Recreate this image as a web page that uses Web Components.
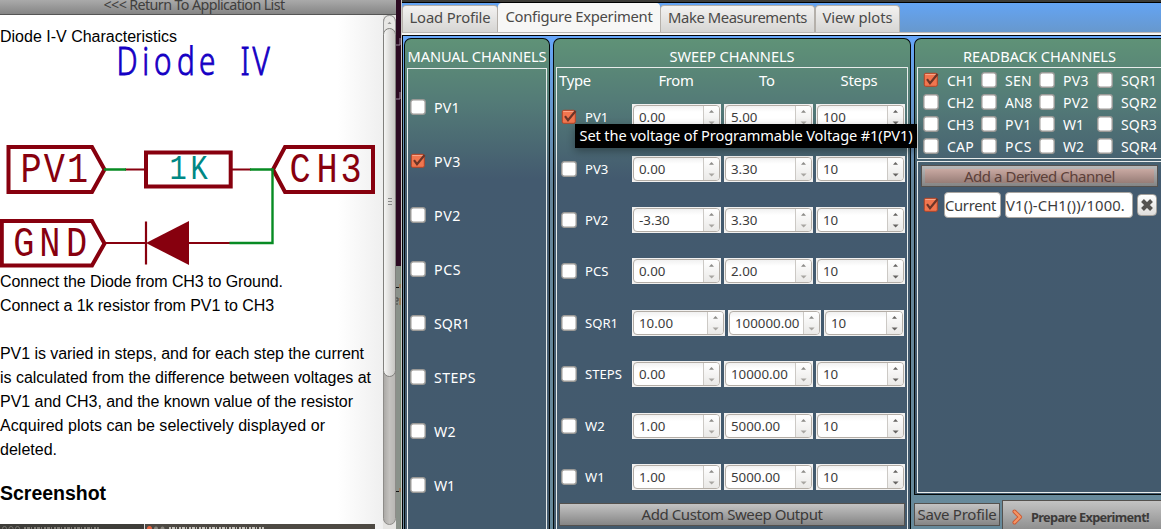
<!DOCTYPE html>
<html lang="en"><head><meta charset="utf-8"><title>Diode I-V Characteristics</title>
<style>html,body{margin:0;width:1161px;height:529px;overflow:hidden;background:#2c0a22}</style></head>
<body><lab-app></lab-app>
<script>
const define=(name,html,setup)=>{
  const t=document.createElement('template');t.innerHTML=html;
  customElements.define(name,class extends HTMLElement{
    constructor(){super();this.attachShadow({mode:'open'}).append(t.content.cloneNode(true));}
    connectedCallback(){if(setup)setup(this,this.shadowRoot);}
  });
};

/* Text that keeps a fixed measure by adjusting its tracking. */
define('fit-text',`<style>:host{display:block;white-space:pre;flex:none}span{display:inline-block}</style><span><slot></slot></span>`,(el,r)=>{
  const w=+el.getAttribute('w'),s=r.querySelector('span');
  const n=el.textContent.length;
  if(!w)return;
  el.style.width=w+'px';
  s.style.letterSpacing='0px';
  s.style.letterSpacing=((w-s.getBoundingClientRect().width)/n)+'px';
});

define('check-box',`<style>
:host{display:block;flex:none;width:16px;height:16px}svg{display:block;overflow:visible}
.on{display:none}:host([checked]) .on{display:block}:host([checked]) .off{display:none}</style>
<svg width="16" height="16" viewBox="0 0 16 16">
<g class="off"><rect x=".8" y=".8" width="14.4" height="14.4" rx="2.5" fill="#fff" stroke="#9b9a97" stroke-width="1.4"/></g>
<g class="on"><rect x="1.3" y="1.3" width="13" height="13" rx="1.5" fill="#f1764f" stroke="#b54426"/><path d="M2.3 2.5h11" stroke="#f9a587"/><path d="M4 7.2l3 4L14.6 2" fill="none" stroke="#6b3528" stroke-width="2.2"/></g></svg>`);

define('check-row',`<style>:host{display:flex;align-items:center;gap:8px;color:#fff}</style><check-box></check-box><slot></slot>`,(el,r)=>{
  if(el.hasAttribute('on'))r.querySelector('check-box').setAttribute('checked','');
});

define('spin-box',`<style>
:host{display:block;box-sizing:border-box;height:26px;background:#f2f1f0;padding:1px;flex:none}
.f{box-sizing:border-box;height:24px;border:1.5px solid #b3ada6;border-radius:4px;display:flex;background:linear-gradient(#f1f1f1,#fff 6px);overflow:hidden}
.v{flex:1;padding-left:5px;line-height:22px;color:#3c3c3c;font-size:13.3px}
.b{width:15px;border-left:1px solid #ccc9c5;background:linear-gradient(#fff,#eae9e7)}
svg{display:block}</style>
<div class="f"><div class="v"><slot></slot></div><div class="b"><svg width="15" height="22" viewBox="0 0 15 22"><path d="M5 6.700L7.500 4 10 6.700z" fill="#8d8c89"/><path class="d" d="M4.600 15.500h6L7.600 18.500z" fill="#a8a6a2"/></svg></div></div>`,(el,r)=>{
  el.style.width=el.getAttribute('w')+'px';
  if(el.hasAttribute('strong'))r.querySelectorAll('path').forEach(p=>p.setAttribute('fill','#666462'));
});

define('sweep-row',`<style>
:host{display:grid;grid-template-columns:71px auto;align-items:center;height:51.45px;flex:none;padding-left:4px;font-size:13.1px}
.s{display:flex;gap:3px}</style><check-row><fit-text></fit-text></check-row><div class="s"></div>`,(el,r)=>{
  const a=n=>el.getAttribute(n),f=r.querySelector('fit-text');
  if(el.hasAttribute('on'))r.querySelector('check-row').shadowRoot.querySelector('check-box').setAttribute('checked','');
  f.replaceWith(Object.assign(document.createElement('fit-text'),{textContent:a('name')}));
  const widths=a('name')==='SQR1'?[93,93,80]:[89,89,89];
  r.querySelector('.s').innerHTML=['from','to','steps'].map((k,i)=>'<spin-box w="'+widths[i]+'"'+(i==2?' strong':'')+'>'+a(k)+'</spin-box>').join('');
});

define('metal-button',`<style>
:host{display:flex;align-items:center;justify-content:center;box-sizing:border-box;border:1.5px solid #54514e;background:linear-gradient(#c3c3c3,#858585);color:#3c3a39;font-size:15px}
:host([warm]){color:#5c4039;background:linear-gradient(#c9a9a2,#977d77) 3px 3px/calc(100% - 6px) calc(100% - 6px) no-repeat,linear-gradient(#b9b9b9,#858585)}</style><slot></slot>`);

define('channel-panel',`<style>
:host{display:flex;flex-direction:column;box-sizing:border-box;border:1.5px solid #050b0b;border-bottom:0;border-radius:7px 7px 0 0;background:linear-gradient(#5f9277 0,#537a77 65px,#435a6f 140px,#435a6d);padding:0 2px;color:#fff}
header{height:28px;display:flex;align-items:center;justify-content:center;font-size:14.6px;box-sizing:border-box;padding-top:6px;flex:none}</style>
<header><slot name="title"></slot></header><slot></slot>`);

define('tab-item',`<style>
:host{display:flex;align-items:center;justify-content:center;box-sizing:border-box;height:27px;border:1px solid #b5b0aa;border-bottom:0;border-radius:4px 4px 0 0;background:linear-gradient(#f3f2f1,#d6d5d3);color:#4b4a48;font-size:14.8px;margin-top:2px;padding-bottom:4px}
:host([active]){background:#f7f7f6;height:31px;margin:0;border-color:#f7f7f6;padding-bottom:6px}</style><slot></slot>`,el=>el.style.width=el.getAttribute('w')+'px');

define('tool-tip',`<style>:host{display:flex;align-items:center;justify-content:center;box-sizing:border-box;padding-bottom:2px;background:#000;color:#fff;box-shadow:0 3px 8px #0005;font-size:14.6px}</style><slot></slot>`);

define('diode-circuit',`<style>:host{display:block;height:225px}svg{display:block}
.t{font-family:"Noto Sans","Open Sans",sans-serif;font-weight:300;font-size:38px}
.m{font-family:"Liberation Mono",monospace;font-size:43px}</style>
<svg width="383" height="225" viewBox="0 45 383 225">
<g class="t" transform="scale(.78 1)" fill="#1500c4" stroke="#1500c4" stroke-width=".9"><text x="149.500 182.500 197.500 227 255.200" y="75">Diode</text><text x="308.500 323.800" y="75">IV</text></g>
<g fill="none" stroke="#87000e" stroke-width="4"><path d="M8.500 147H92L104.500 169.500 92 192H8.500z"/><path d="M146 152.500h84.700v34H146z"/><path d="M373 147H285L273 169.500 285 192h88z"/><path d="M1.800 221H92L104.500 243.500 92 265.500H1.800z"/></g>
<g fill="none" stroke="#87000e" stroke-width="2.2"><path d="M125 169.500h20M232 169.500h19M106 243h40M188 243h42M146 221.500v43"/></g>
<path d="M146 243l43-22v44z" fill="#87000e"/>
<path d="M104 169.500h22M250 169.500h22.500V243H229.500" fill="none" stroke="#078b23" stroke-width="2.4"/>
<g class="m" fill="#87000e" transform="scale(.82 1)"><text x="24.900 53.500 81.600" y="182">PV1</text><text x="352.900 385.900 415.100" y="182">CH3</text><text x="16.300 48 80.400" y="256">GND</text></g>
<text class="m" transform="scale(.82 1)" x="206.600 232.200" y="179" style="font-size:35px" fill="#008884">1K</text></svg>`);

define('scroll-bar',`<style>:host{display:block;width:13px;flex:none}svg{display:block}</style>
<svg width="13" height="514" viewBox="0 15 13 514"><defs><linearGradient id="g"><stop stop-color="#f7f7f6"/><stop offset="1" stop-color="#c5c3c0"/></linearGradient><linearGradient id="t"><stop stop-color="#aaa8a5"/><stop offset=".5" stop-color="#c4c2bf"/><stop offset="1" stop-color="#b8b6b3"/></linearGradient></defs>
<rect y="15" width="13" height="514" fill="#e5e4e2"/><rect x=".5" y="15.5" width="12" height="509" rx="6" fill="url(#t)" stroke="#8e8c89"/>
<path d="M.5 34V22Q1 15.5 6.5 15.5T12.5 22V34z" fill="#e8e7e5" stroke="#999"/><path d="M4.500 24l2-2.300 2 2.300z" fill="#999"/>
<rect x=".5" y="28.5" width="12" height="348" rx="6" fill="url(#g)" stroke="#81807d"/><path d="M5 198.500h4M5 201.500h4M5 204.500h4" stroke="#888"/></svg>`);

define('help-pane',`<style>
:host{display:flex;flex-direction:column;width:396px;background:#fff;color:#000;font:16px/24px "Liberation Sans",Arial,sans-serif}
header{height:15px;flex:none;box-sizing:border-box;border-bottom:1.5px solid #555;background:linear-gradient(#aaa,#858585);color:#403e3d;font:14.3px/14px "Noto Sans",sans-serif;display:flex;justify-content:center;align-items:center;padding:0 8px 5px 0}
.b{display:flex;height:514px}.c{width:383px;box-sizing:border-box;background:linear-gradient(90deg,#fff 88%,#efefef)}
.first{height:30px;padding-top:10px;box-sizing:border-box;line-height:23px}
h3{margin:16px 0 0;font-size:19.5px;line-height:30px;height:46px}
.shot{display:flex;height:6px;width:375px}.shot div{height:6px;box-sizing:border-box}.l{width:144px;background:#3e3d39}.r{flex:1;background:#4d4943;border-left:1px solid #ddd}.shot svg{display:block}</style>
<header><fit-text w="181">&lt;&lt;&lt; Return To Application List</fit-text></header>
<div class="b"><div class="c"><div class="first"><fit-text w="177">Diode I-V Characteristics</fit-text></div>
<diode-circuit></diode-circuit>
<fit-text w="283">Connect the Diode from CH3 to Ground.</fit-text><fit-text w="274">Connect a 1k resistor from PV1 to CH3</fit-text><br>
<fit-text w="364">PV1 is varied in steps, and for each step the current</fit-text><fit-text w="371">is calculated from the difference between voltages at</fit-text><fit-text w="353">PV1 and CH3, and the known value of the resistor</fit-text><fit-text w="325">Acquired plots can be selectively displayed or</fit-text><fit-text w="57">deleted.</fit-text>
<h3><fit-text w="106">Screenshot</fit-text></h3>
<div class="shot"><div class="l"><svg width="143" height="5"><g fill="none" stroke="#77756f"><circle cx="4.500" cy="4.500" r="2"/><circle cx="11" cy="4.500" r="2"/><circle cx="17.500" cy="4.500" r="2"/></g><path d="M24 4h75" stroke="#807e77" stroke-width="2" stroke-dasharray="2 1 3 1 1 2"/></svg></div><div class="r"><svg width="230" height="5"><circle cx="4.500" cy="4.500" r="2.500" fill="#e46442"/><circle cx="11" cy="4.500" r="2" fill="#8a867e"/><circle cx="17.500" cy="4.500" r="2" fill="#8a867e"/><path d="M24 4h95" stroke="#c5c3bc" stroke-width="2" stroke-dasharray="2 1 3 1 1 2"/></svg></div></div>
</div><scroll-bar></scroll-bar></div>`);

define('desk-gap',`<style>:host{display:block;width:6px;overflow:hidden}svg{display:block}</style>
<svg width="6" height="529"><path fill="#2c0a22" d="M0 0h6v529H0z"/><path fill="#8a918a" d="M0 266h6v263H0z"/><path d="M4.500 266v263" stroke="#789078"/><path d="M5.500 0v529" stroke="#cac8c6"/><path d="M0 45h4V38M0 99h4V92" fill="none" stroke="#9a879b"/><path d="M0 287.500h3M0 491.500h3" stroke="#111"/><path d="M4 284v4M4 298v7M4 488v4" stroke="#a86737"/><path d="M0 298h2v3H0M0 304h2" fill="none" stroke="#444"/></svg>`);

define('experiment-window',`<style>
:host{display:flex;flex-direction:column;width:759px;flex:none;height:529px;background:#668a9c;font-family:"Noto Sans","Open Sans",sans-serif}
.top{height:3px;flex:none;background:#3c3b37;border-bottom:1px solid #000;box-sizing:border-box}
.tabs{display:flex;height:29px;background:linear-gradient(#64a4f4,#6798cd);flex:none;align-items:flex-start}
.line{height:4px;flex:none;background:#f7f7f6;border-bottom:1.5px solid #05070a;box-sizing:border-box;border-top:.5px solid #bcb8b4}
.main{display:flex;gap:3px;flex:1;padding:2px 0 0 2px;background:linear-gradient(#67a7fb,#65859a 150px,#678a9b);border-left:1px solid #000;box-sizing:border-box;margin:0}
.m{width:146px;margin-left:-1px;flex:none}.s{width:358px;flex:none}.right{width:248px;flex:none;display:flex;flex-direction:column}
.frame{border:1.5px solid #e8eceb;box-sizing:border-box}
.m .frame{flex:1;border-bottom:0;padding:11px 0 0 2px;margin-top:1px;font-size:14.2px}.m check-row{height:54px}
.s .frame{flex:1;border-bottom:0;display:flex;flex-direction:column}
.head{display:grid;grid-template-columns:75px 88px 94px 90px;height:24px;flex:none;align-items:center;font-size:14.8px}.head fit-text{justify-self:center}.head fit-text:first-child{justify-self:start;margin-left:2px}
.head+sweep-row{margin-top:-.6px}
.s metal-button{margin:0 2px 0 2px;height:23px;flex:none;padding-bottom:1px}
.r{height:457px;border-right:0;border-bottom:1.5px solid #050b0b;border-radius:7px 0 0 0;padding-right:0;flex:none}
.grid{height:92px;flex:none;display:grid;grid-template-columns:repeat(4,58px);grid-template-rows:repeat(4,22px);padding:1px 0 0 5px;font-size:14px;border-right-width:1px}
.derive{margin-top:2px;flex:1;margin-bottom:1px;padding:3px 2px 2px 3px}
.derive metal-button{height:22px;width:237px;padding-bottom:1px}
.row{display:flex;align-items:center;margin-top:5px;height:26px;padding-left:2px;color:#3c3c3c;font-size:14.8px}
.input{height:26px;box-sizing:border-box;background:#fff;border:1.5px solid #aaa6a1;border-radius:4px;display:flex;align-items:center;justify-content:flex-start;padding-bottom:1px}
.x{box-sizing:border-box;width:20px;height:22px;background:linear-gradient(#fff,#dedddc);border:1px solid #a3a09c;border-radius:4px;margin-left:4px;display:grid;place-items:center}
.foot{display:flex;align-items:flex-start;height:34px;overflow:hidden;gap:2px}
.save{width:86px;height:23px;margin-top:8px;padding-bottom:1px;flex:none}.prep{width:170px;height:36px;margin-top:5px;justify-content:flex-start;font-size:12.8px;font-weight:bold;flex:none;padding-left:9px}
.prep fit-text{margin-left:7px;margin-top:-2px}.prep svg{margin-top:-2px}</style>
<div class="top"></div><div class="tabs"><tab-item w="96"><fit-text w="81">Load Profile</fit-text></tab-item><tab-item active w="162"><fit-text w="147">Configure Experiment</fit-text></tab-item><tab-item w="155"><fit-text w="139">Make Measurements</fit-text></tab-item><tab-item w="85"><fit-text w="70">View plots</fit-text></tab-item></div><div class="line"></div>
<div class="main"><channel-panel class="m"><fit-text slot="title" w="139">MANUAL CHANNELS</fit-text><div class="frame">
<check-row><fit-text w="26">PV1</fit-text></check-row><check-row on><fit-text w="27">PV3</fit-text></check-row><check-row><fit-text w="27">PV2</fit-text></check-row><check-row><fit-text w="27">PCS</fit-text></check-row><check-row><fit-text w="36">SQR1</fit-text></check-row><check-row><fit-text w="42">STEPS</fit-text></check-row><check-row><fit-text w="22">W2</fit-text></check-row><check-row><fit-text w="21">W1</fit-text></check-row></div></channel-panel>
<channel-panel class="s"><fit-text slot="title" w="125">SWEEP CHANNELS</fit-text><div class="frame"><div class="head"><fit-text w="32">Type</fit-text><fit-text w="35">From</fit-text><fit-text w="16">To</fit-text><fit-text w="37">Steps</fit-text></div>
<sweep-row on name="PV1" from="0.00" to="5.00" steps="100"></sweep-row><sweep-row name="PV3" from="0.00" to="3.30" steps="10"></sweep-row><sweep-row name="PV2" from="-3.30" to="3.30" steps="10"></sweep-row><sweep-row name="PCS" from="0.00" to="2.00" steps="10"></sweep-row><sweep-row name="SQR1" from="10.00" to="100000.00" steps="10"></sweep-row><sweep-row name="STEPS" from="0.00" to="10000.00" steps="10"></sweep-row><sweep-row name="W2" from="1.00" to="5000.00" steps="10"></sweep-row><sweep-row name="W1" from="1.00" to="5000.00" steps="10"></sweep-row>
<metal-button><fit-text w="181">Add Custom Sweep Output</fit-text></metal-button></div></channel-panel>
<div class="right"><channel-panel class="r"><fit-text slot="title" w="153">READBACK CHANNELS</fit-text><div class="frame grid"></div>
<div class="frame derive"><metal-button warm><fit-text w="151">Add a Derived Channel</fit-text></metal-button><div class="row"><check-box checked></check-box><div class="input" style="width:57px;margin-left:5px"><fit-text w="51">Current</fit-text></div><div class="input" style="width:128px;margin-left:4px"><fit-text w="119">V1()-CH1())/1000.</fit-text></div><div class="x"><svg width="14" height="14" viewBox="0 0 14 14"><path d="M2.500 2.500l9 9M11.500 2.500l-9 9" stroke="#555351" stroke-width="4"/></svg></div></div></div></channel-panel>
<div class="foot"><metal-button class="save"><fit-text w="79">Save Profile</fit-text></metal-button><metal-button class="prep"><svg width="12" height="16" viewBox="0 0 12 16"><path d="M2.500 2.500L8 8 2.500 13.500" fill="none" stroke="#c85430" stroke-width="4" stroke-linecap="round" stroke-linejoin="round"/><path d="M2.500 2.500L8 8 2.500 13.500" fill="none" stroke="#f49463" stroke-width="2.300" stroke-linecap="round"/></svg><fit-text w="118">Prepare Experiment!</fit-text></metal-button></div></div></div>`,(el,r)=>{
  const names='CH1 SEN PV3 SQR1 CH2 AN8 PV2 SQR2 CH3 PV1 W1 SQR3 CAP PCS W2 SQR4'.split(' '),widths=[27,27,26,36];
  r.querySelector('.grid').innerHTML=names.map((n,i)=>'<check-row'+(i?'':' on')+'><fit-text w="'+(n[0]==='W'?21:widths[i%4])+'">'+n+'</fit-text></check-row>').join('');
});

define('lab-app',`<style>:host{display:flex;width:1161px;height:529px;position:relative;overflow:hidden}
tool-tip{position:absolute;left:575px;top:124px;width:342px;height:24px;font-family:"Noto Sans",sans-serif}</style>
<help-pane></help-pane><desk-gap></desk-gap><experiment-window></experiment-window><tool-tip><fit-text w="333">Set the voltage of Programmable Voltage #1(PV1)</fit-text></tool-tip>`);
</script></body></html>
